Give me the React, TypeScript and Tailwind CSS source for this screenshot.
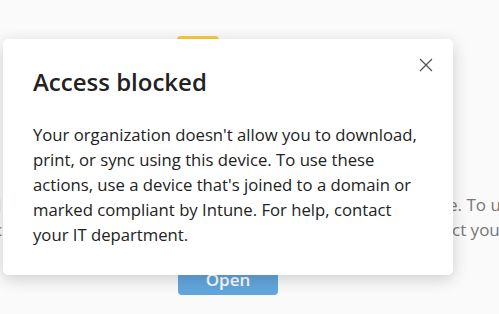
import React from "react";

const font = { fontFamily: '"Open Sans", "Noto Sans", Arial, sans-serif' };

const App = () => {
  return (
    <div
      className="relative w-[499px] h-[314px] overflow-hidden bg-[#fafafa]"
      style={font}
    >
      {/* page behind the dialog */}
      <div className="flex flex-col items-start pt-[36px]">
        <div className="ml-[177px] w-[42px] h-[4px] rounded-t-sm bg-[#f5cc3a]" />
        <div className="mt-[152px] w-full text-[17px] leading-[25px] text-[#777]">
          <div className="flex whitespace-nowrap">
            <span className="w-[451px] shrink-0 -ml-[3px]">l</span>
            <span>e. To use</span>
          </div>
          <div className="flex whitespace-nowrap">
            <span className="w-[458px] shrink-0 -ml-[6px]">c</span>
            <span>ct your</span>
          </div>
        </div>
        <button className="ml-[178px] mt-[19px] w-[100px] h-[34px] rounded-[4px] bg-[#62a6dd] text-white text-[17px] font-semibold leading-[34px] pt-[2px]">
          Open
        </button>
      </div>

      {/* dialog */}
      <div className="absolute left-[3px] top-[39px] w-[450px] h-[236px] rounded-[5px] bg-white shadow-[0_4px_16px_rgba(0,0,0,0.18)] pl-[30px] pr-[20px] pt-[27px]">
        <button className="absolute right-[20px] top-[19px] w-[14px] h-[14px] text-[#555]">
          <svg viewBox="0 0 14 14" className="w-[14px] h-[14px]" fill="none" stroke="currentColor" strokeWidth="1.3">
            <path d="M1 1 L13 13 M13 1 L1 13" />
          </svg>
        </button>
        <h1 className="text-[24px] leading-[32px] font-semibold text-[#222]">
          Access blocked
        </h1>
        <p className="mt-[24px] w-[392px] text-[16.7px] leading-[25px] text-[#222]">
          Your organization doesn't allow you to download, print, or sync using
          this device. To use these actions, use a device that's joined to a
          domain or marked compliant by Intune. For help, contact your IT
          department.
        </p>
      </div>
    </div>
  );
};

export default App;
